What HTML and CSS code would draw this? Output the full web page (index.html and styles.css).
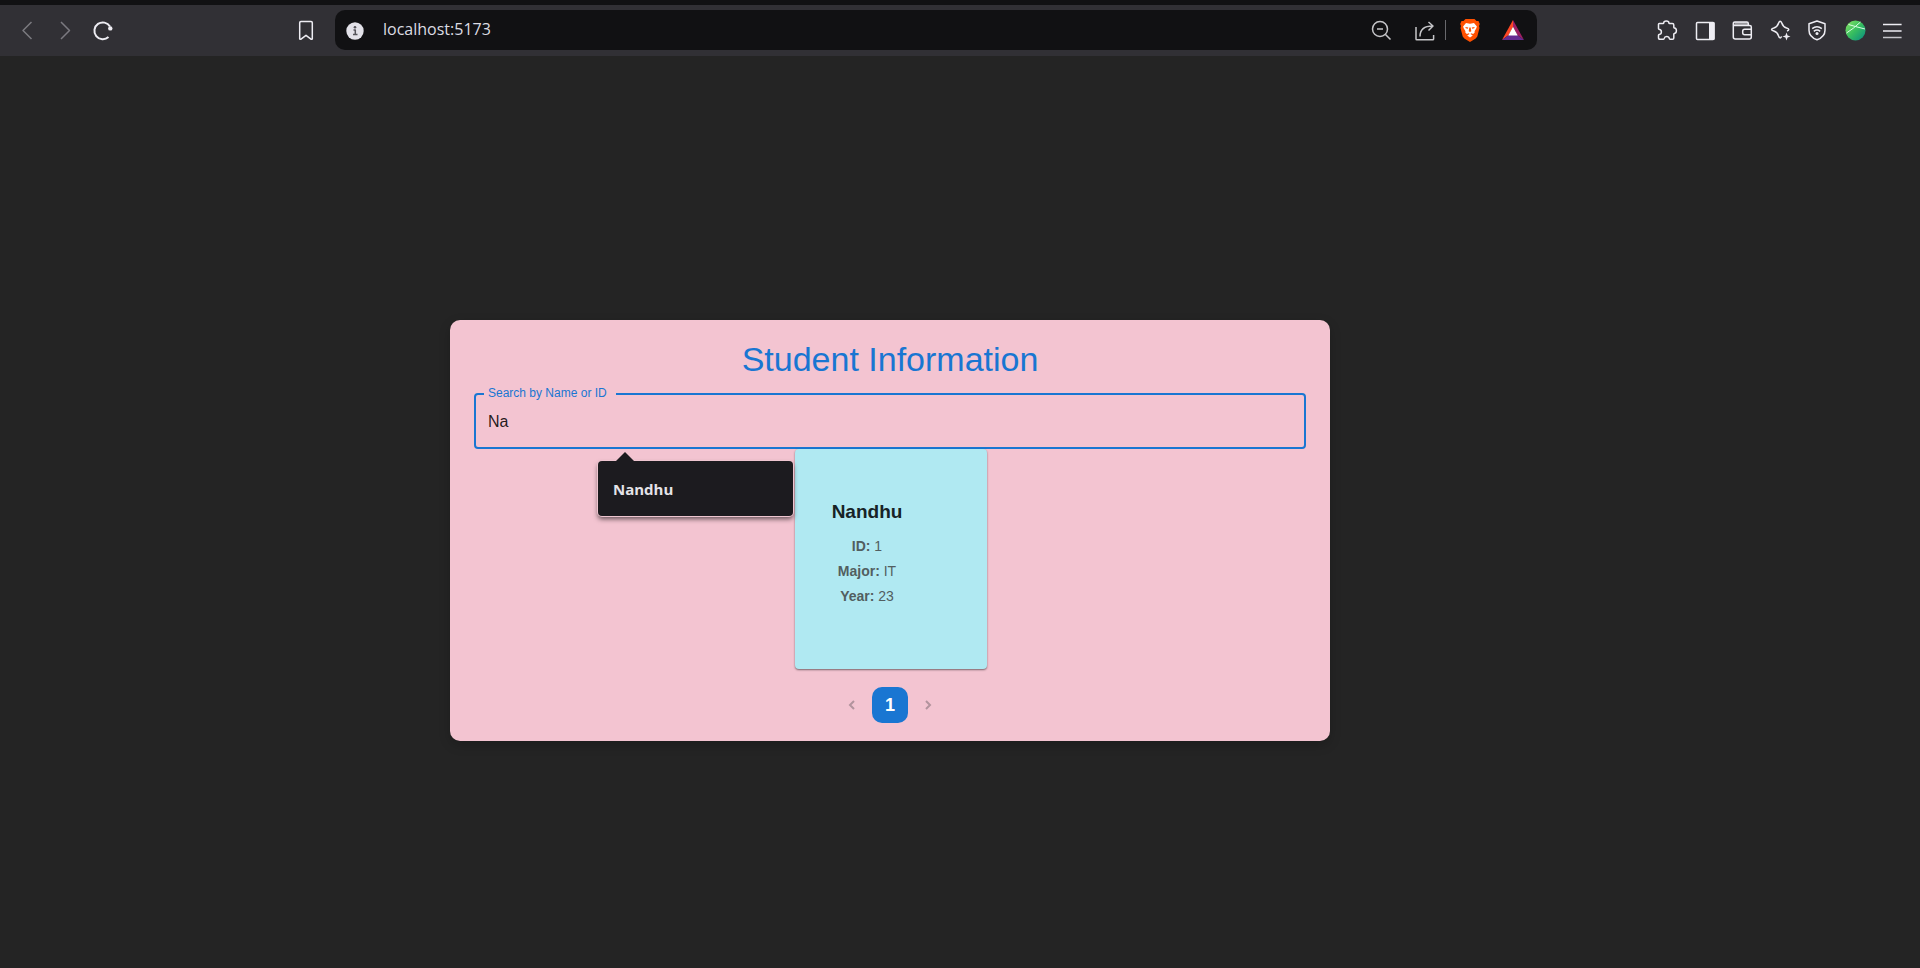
FILE: index.html
```html
<!DOCTYPE html>
<html lang="en">
<head>
<meta charset="utf-8">
<title>Student Information</title>
<link rel="stylesheet" href="styles.css">
</head>
<body>
<header class="toolbar">
  <nav class="nav-group" aria-label="History">
    <button class="tool dim" aria-label="Back"><svg class="icon" viewBox="0 0 20 20"><path d="M14.500 2L6 10.500l8.500 8.500"/></svg></button>
    <button class="tool dim" aria-label="Forward"><svg class="icon" viewBox="0 0 20 20"><path d="M6 2l8.500 8.500L6 19"/></svg></button>
    <button class="tool" aria-label="Reload"><svg class="icon" viewBox="0 0 20 20"><path class="bold" d="M17 6.500A8.400 8.400 0 1 0 15.500 17"/><circle class="solid" cx="17.300" cy="8.400" r="2.200"/></svg></button>
  </nav>
  <button class="tool" aria-label="Bookmark"><svg class="icon" viewBox="0 0 20 20"><path d="M3.700 2.700q0-1.200 1.200-1.200h10.200q1.200 0 1.200 1.200v16.300l-1 .3L10 15.300l-5.300 4-1-.3z"/></svg></button>
  <div class="address">
    <button class="tool small" aria-label="Site information"><svg class="icon" viewBox="0 0 20 20"><circle class="solid disc" cx="10" cy="11" r="8.700"/><path class="cut" d="M8.500 10h1.800v4.500M8 14.500h4.500"/><circle class="cutdot" cx="10" cy="7.200" r="1.300"/></svg></button>
    <input class="url" aria-label="Address" value="localhost:5173">
    <button class="tool soft" aria-label="Zoom"><svg class="icon" viewBox="0 0 20 20"><circle cx="9" cy="9" r="7.500"/><path d="M14.500 14.500L19.500 19.500M6 9h6"/></svg></button>
    <button class="tool soft" aria-label="Share"><svg class="icon" viewBox="0 0 20 20"><path d="M2 7v12q0 .8.800.8h16q.8 0 .8-.8v-4M6 16.500C6 10 10 6 18.500 6M14.500 2l4.500 4-4.500 4.500"/></svg></button>
    <span class="divider"></span>
    <button class="tool" aria-label="Brave Shields"><svg class="logo" viewBox="0 0 20 23"><path fill="#ff5000" d="M5.500 0h9l2 2 2-.1 1.300 3-.8 2.200.5 2-2.200 8.300-1.600 2.200L10 23l-5.700-3.400-1.600-2.200L.5 9.100l.5-2L.2 4.900l1.300-3 2 .1z"/><path fill="#fff" d="M6 4l4 .7 4-.7 2.900 3.500-.7 2-1.700 2.800.3 1-1.600 1.700-2-.7-.7.700 2.300 1.500L10 18.500l-2.800-2 2.300-1.500-.7-.7-2 .7-1.600-1.700.3-1-1.700-2.800-.7-2z"/><path fill="#ff5000" d="M5.300 8.100l3 .4-.5 1.300-2-.5zM14.700 8.100l-3 .4.500 1.300 2-.5zM9.300 8.500l-.6 3.700 1.300.8 1.300-.8-.6-3.700z"/></svg></button>
    <button class="tool bat-button" aria-label="Brave Rewards"><svg class="bat" viewBox="0 0 22 20"><path fill="#ff4724" d="M11 0v7l-4.300 8L0 20z"/><path fill="#9e1f63" d="M11 0l11 20-6.700-5L11 7z"/><path fill="#662d91" d="M0 20l6.700-5h8.600L22 20z"/><path fill="#fff" d="M11 6.700l4.700 8.700H6.300z"/></svg></button>
  </div>
  <div class="actions">
    <button class="tool narrow" aria-label="Extensions"><svg class="icon" viewBox="0 0 20 20"><path d="M2.300 3.500H6q.7 0 .7-.6C6.700 1.700 7.800 1 9.300 1s2.600.7 2.600 1.900q0 .6.700.6h2.700q1.500 0 1.500 1.500v2.300q0 .7.600.8c1.300.2 2 1.100 2 2.600s-.7 2.500-2 2.700q-.6.100-.6.700v3.800q0 1.300-1.300 1.300h-2.400q-.7 0-.8-.7c-.2-1.200-1.200-1.900-2.600-1.900s-2.300.7-2.500 1.900q-.1.700-.8.700H2.900q-1.400 0-1.400-1.400v-2.500q0-.7.700-.9c1.400-.3 2.200-1.200 2.200-2.500S3.600 9.600 2.200 9.300q-.7-.2-.7-.9V4.300q0-.8.800-.8z"/></svg></button>
    <button class="tool narrow" aria-label="Sidebar"><svg class="icon" viewBox="0 0 20 20"><rect x="1.500" y="2.500" width="17.500" height="17" rx="1"/><path class="solid" d="M14 2.500h5.500v17H14z"/></svg></button>
    <button class="tool narrow" aria-label="Wallet"><svg class="icon" viewBox="0 0 20 20"><path class="flap" d="M2.500 2h12.300q1.500 0 1.500 1.500v2H2.500z"/><path d="M1.300 3.500V17q0 2 2 2h14q2 0 2-2V7q0-1.500-1.500-1.500H3Q1.300 5.500 1.300 3.700T3 2h11.800q1.500 0 1.500 1.500v2M19.300 9.300h-6.600q-2 0-2 2v1.400q0 2 2 2h6.600"/></svg></button>
    <button class="tool narrow" aria-label="Leo AI"><svg class="icon" viewBox="0 0 20 20"><path d="M17 11q1.800-.5 1.800-1.500t-2.200-1.500c-2.900-.9-3.900-1.900-4.700-4.700C11.400 1.700 11 1.200 10.200 1.200S9 1.700 8.500 3.300C7.700 6.100 6.700 7.100 3.800 8 2 8.500 1.500 8.700 1.500 9.500s.5 1 2.300 1.500c2.900.9 3.900 1.900 4.700 4.700.5 1.600.9 2.200 1.700 2.200q.9 0 1.300-1.500"/><path class="solid" d="M16.500 12.500l1.100 2.900 2.900 1.100-2.900 1.100-1.100 2.900-1.100-2.900-2.900-1.100 2.900-1.100z"/></svg></button>
    <button class="tool narrow" aria-label="VPN"><svg class="icon" viewBox="0 0 20 20"><path d="M10 1l8 2.700v6.500c0 4.500-3 7.700-8 9.600-5-1.900-8-5.100-8-9.600V3.700zM5.200 8.700q4.800-4 9.600 0M6.800 11.400q3.200-2.600 6.400 0"/><circle class="solid" cx="10" cy="13.600" r="1.500"/></svg></button>
    <button class="tool narrow" aria-label="Profile"><svg class="icon" viewBox="0 0 20 20"><defs><linearGradient id="globe" x1="0" y1="0" x2="1" y2="1"><stop offset="0" stop-color="#8ce563"/><stop offset=".5" stop-color="#36bd60"/><stop offset="1" stop-color="#078a83"/></linearGradient></defs><circle cx="10.500" cy="10.500" r="10" fill="url(#globe)" stroke="none"/><path class="globe-line" d="M1.500 13Q8 9 15.500 2M3.500 4.500Q10 6.500 20 9"/></svg></button>
    <button class="tool narrow" aria-label="Menu"><svg class="icon" viewBox="0 0 20 20"><path d="M1 4.500h18.600M1 11h18.600"/><path class="flap-line" d="M1 17.500h18.600"/></svg></button>
  </div>
</header>
<main class="page">
  <section class="panel">
    <h1 class="title">Student Information</h1>
    <fieldset class="field">
      <legend class="legend"><label class="legend-text" for="search">Search by Name or ID</label></legend>
      <input class="search" id="search" value="Na">
    </fieldset>
    <div class="results">
      <article class="card">
        <h2 class="name">Nandhu</h2>
        <p class="detail"><strong>ID:</strong> 1</p>
        <p class="detail"><strong>Major:</strong> IT</p>
        <p class="detail"><strong>Year:</strong> 23</p>
      </article>
    </div>
    <nav class="pages" aria-label="Pagination">
      <button class="step" aria-label="Previous page" disabled><svg class="chevron" viewBox="0 0 10 10"><path d="M7 1L3 5l4 4"/></svg></button>
      <button class="current" aria-current="page">1</button>
      <button class="step" aria-label="Next page" disabled><svg class="chevron" viewBox="0 0 10 10"><path d="M3 1l4 4-4 4"/></svg></button>
    </nav>
    <div class="suggestions"><button class="suggestion">Nandhu</button></div>
  </section>
</main>
</body>
</html>
```

FILE: styles.css
```css
* { box-sizing: border-box; }
body {
  margin: 0;
  min-height: 100vh;
  display: flex;
  flex-direction: column;
  background: #242424;
  font-family: "Liberation Sans", Arial, sans-serif;
}
button, input { font: inherit; color: inherit; border: 0; background: none; padding: 0; outline: 0; }
.toolbar {
  display: flex;
  align-items: center;
  height: 56px;
  padding: 0 13px 1px 8px;
  border-top: 5px solid #111113;
  background: #313035;
  color: #eeedf3;
}
.nav-group { display: flex; margin-right: 165px; }
.tool { display: flex; flex: none; align-items: center; justify-content: center; width: 38px; height: 38px; }
.small { width: 40px; }
.narrow { width: 30px; }
.dim { color: #7b7a80; }
.soft { color: #c5c5c8; }
.icon { width: 20px; height: 20px; fill: none; stroke: currentColor; stroke-width: 1.5; stroke-linejoin: round; overflow: visible; }
.bold { stroke-width: 2; }
.solid { fill: currentColor; stroke: none; }
.disc { fill: #e3e2e9; }
.cut { stroke: #55545a; }
.cutdot { fill: #55545a; stroke: none; }
.flap { fill: #99989d; stroke: none; }
.flap-line { stroke: #c5c4ca; }
.globe-line { stroke: #d9ffe3; stroke-width: 1; }
.logo { width: 20px; height: 23px; }
.bat { width: 22px; height: 20px; }
.address {
  display: flex;
  flex: 1;
  align-items: center;
  min-width: 0;
  height: 40px;
  margin: 0 115px 0 10px;
  padding-right: 5px;
  border-radius: 10px;
  background: #111113;
}
.url { flex: 1; min-width: 0; height: 38px; margin-left: 8px; padding-bottom: 2px; font-family: "Open Sans", sans-serif; font-size: 16px; color: #dcdce2; }
.soft + .soft { margin-left: 5px; }
.divider { width: 1px; height: 20px; margin-left: 2px; margin-right: 5px; background: #69696d; }
.bat-button { margin-left: 5px; }
.actions { display: flex; flex: none; justify-content: space-between; width: 255px; }
.page {
  display: flex;
  flex: 1;
  align-items: center;
  justify-content: center;
  padding: 37px 140px 0 0;
}
.panel {
  position: relative;
  width: 100%;
  max-width: 880px;
  padding: 18px 24px;
  border-radius: 10px;
  background: #f3c4d1;
  box-shadow: 0 4px 12px rgba(0, 0, 0, 0.2);
}
.title { margin: 0; font-size: 34px; font-weight: 400; line-height: 42px; text-align: center; color: #1976d2; }
.field { height: 63px; margin: 6px 0 0; padding: 0 12px; border: 2px solid #1976d2; border-radius: 4px; }
.legend { height: 16px; margin-left: -4px; padding: 0 9px 0 4px; font-size: 12px; line-height: 14px; color: #1976d2; }
.legend-text { display: block; }
.search { display: block; width: 100%; height: 40px; font-size: 16px; color: rgba(0, 0, 0, 0.87); }
.results { display: flex; justify-content: center; padding-left: 2px; }
.card {
  width: 192px;
  height: 220px;
  padding: 48px 48px 0 0;
  border-radius: 4px;
  background: #b0e9f2;
  box-shadow: 0 1px 2px rgba(0, 0, 0, 0.5);
  text-align: center;
}
.name { margin: 0 0 7px; font-size: 19px; line-height: 30px; color: #172326; }
.detail { margin: 0; font-size: 14px; line-height: 25px; color: #525e60; }
.pages { display: flex; justify-content: center; align-items: center; gap: 2px; margin-top: 18px; }
.step { display: flex; align-items: center; justify-content: center; width: 36px; height: 36px; }
.chevron { width: 10px; height: 10px; fill: none; stroke: #b2939d; stroke-width: 2; }
.current { width: 36px; height: 36px; border-radius: 10px; background: #1976d2; font-size: 18px; font-weight: 700; color: #fff; }
.suggestions {
  position: absolute;
  top: 141px;
  left: 148px;
  width: 195px;
  border-radius: 4px;
  background: #1c1b1f;
  box-shadow: 0 0 0 1px #eec5d0, 0 3px 5px rgba(0, 0, 0, 0.6);
}
.suggestions::before {
  content: "";
  position: absolute;
  top: -9px;
  left: 18px;
  border: 9px solid transparent;
  border-top: 0;
  border-bottom-color: #1c1b1f;
}
.suggestion { display: block; width: 100%; height: 55px; padding: 0 15px; font-family: "Open Sans", sans-serif; font-size: 15px; font-weight: 700; text-align: left; color: #e4e3e8; }
```
